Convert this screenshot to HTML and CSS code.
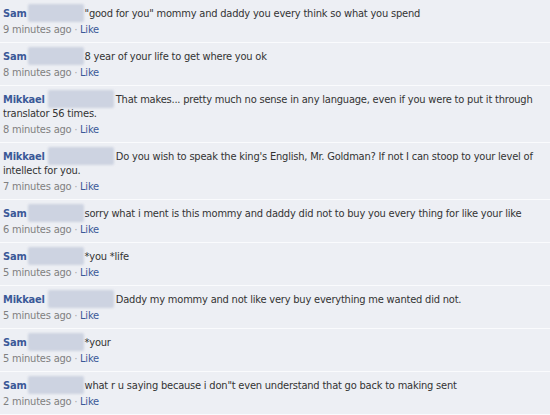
FILE: index.html
```html
<!DOCTYPE html>
<html>
<head>
<meta charset="utf-8">
<link rel="stylesheet" href="styles.css">
</head>
<body>
<ul class="comments">
  <li class="comment">
    <div class="body"><a class="name">Sam</a><span class="blur blur-sam"></span>"good for you" mommy and daddy you every think so what you spend</div>
    <div class="meta">9 minutes ago <span class="dot">·</span> <a class="like">Like</a></div>
  </li>
  <li class="comment">
    <div class="body"><a class="name">Sam</a><span class="blur blur-sam"></span>8 year of your life to get where you ok</div>
    <div class="meta">8 minutes ago <span class="dot">·</span> <a class="like">Like</a></div>
  </li>
  <li class="comment">
    <div class="body"><a class="name">Mikkael</a><span class="blur blur-mik"></span>That makes... pretty much no sense in any language, even if you were to put it through translator 56 times.</div>
    <div class="meta">8 minutes ago <span class="dot">·</span> <a class="like">Like</a></div>
  </li>
  <li class="comment">
    <div class="body"><a class="name">Mikkael</a><span class="blur blur-mik"></span>Do you wish to speak the king's English, Mr. Goldman? If not I can stoop to your level of intellect for you.</div>
    <div class="meta">7 minutes ago <span class="dot">·</span> <a class="like">Like</a></div>
  </li>
  <li class="comment">
    <div class="body"><a class="name">Sam</a><span class="blur blur-sam"></span>sorry what i ment is this mommy and daddy did not to buy you every thing for like your like</div>
    <div class="meta">6 minutes ago <span class="dot">·</span> <a class="like">Like</a></div>
  </li>
  <li class="comment">
    <div class="body"><a class="name">Sam</a><span class="blur blur-sam"></span>*you *life</div>
    <div class="meta">5 minutes ago <span class="dot">·</span> <a class="like">Like</a></div>
  </li>
  <li class="comment">
    <div class="body"><a class="name">Mikkael</a><span class="blur blur-mik"></span>Daddy my mommy and not like very buy everything me wanted did not.</div>
    <div class="meta">5 minutes ago <span class="dot">·</span> <a class="like">Like</a></div>
  </li>
  <li class="comment">
    <div class="body"><a class="name">Sam</a><span class="blur blur-sam"></span>*your</div>
    <div class="meta">5 minutes ago <span class="dot">·</span> <a class="like">Like</a></div>
  </li>
  <li class="comment">
    <div class="body"><a class="name">Sam</a><span class="blur blur-sam"></span>what r u saying because i don"t even understand that go back to making sent</div>
    <div class="meta">2 minutes ago <span class="dot">·</span> <a class="like">Like</a></div>
  </li>
</ul>
</body>
</html>
```

FILE: styles.css
```css
html, body {
  margin: 0;
  padding: 0;
  background: #edeff4;
}
body {
  font-family: "DejaVu Sans Condensed", "DejaVu Sans", sans-serif;
  font-size: 11px;
  letter-spacing: -0.2px;
  color: #333333;
  width: 550px;
  height: 415px;
  overflow: hidden;
}
.comments {
  list-style: none;
  margin: 0;
  padding: 0;
}
.comment {
  padding: 7px 6px 5px 3px;
  border-bottom: 1px solid #fafbfd;
}
.body {
  line-height: 14px;
}
.name {
  color: #3b5998;
  font-weight: bold;
}
.blur {
  display: inline-block;
  vertical-align: top;
  height: 18px;
  margin: -3px 1px -1px 1px;
  background: #cdd3e1;
  border-radius: 2px;
  filter: blur(1px);
}
.blur-sam { width: 56px; }
.blur-mik { width: 66px; margin-left: 3px; margin-right: 2px; }
.meta {
  margin-top: 2px;
  line-height: 14px;
  color: #808080;
}
.dot {
  color: #a0a0a0;
  font-size: 10px;
}
.like {
  color: #3b5998;
}
```
